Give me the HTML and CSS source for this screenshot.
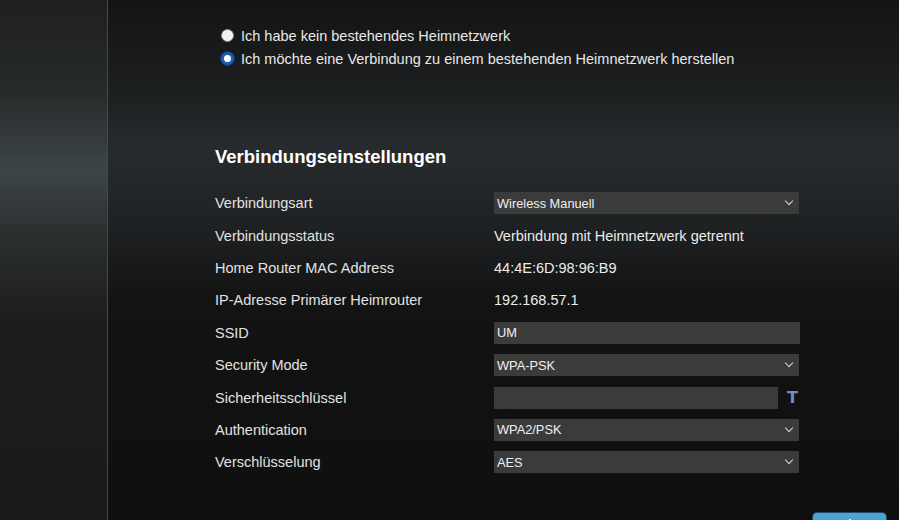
FILE: index.html
```html
<!DOCTYPE html>
<html lang="de">

<head>
    <meta charset="UTF-8">
    <meta name="viewport" content="width=device-width, initial-scale=1.0">
    <title>Heimnetzwerk</title>
    <link rel="stylesheet" href="styles.css">
</head>

<body>
    <div class="sidebar"></div>

    <div class="main">
        <div class="radio-group">
            <label class="radio-row">
                <input type="radio" name="mode" value="none">
                <span>Ich habe kein bestehendes Heimnetzwerk</span>
            </label>
            <label class="radio-row">
                <input type="radio" name="mode" value="existing" checked>
                <span>Ich möchte eine Verbindung zu einem bestehenden Heimnetzwerk herstellen</span>
            </label>
        </div>

        <h2 class="section-title">Verbindungseinstellungen</h2>

        <div class="settings">
            <div class="label">Verbindungsart</div>
            <div class="value">
                <div class="select-wrap">
                    <select>
                        <option>Wireless Manuell</option>
                    </select>
                </div>
            </div>

            <div class="label">Verbindungsstatus</div>
            <div class="value">Verbindung mit Heimnetzwerk getrennt</div>

            <div class="label">Home Router MAC Address</div>
            <div class="value">44:4E:6D:98:96:B9</div>

            <div class="label">IP-Adresse Primärer Heimrouter</div>
            <div class="value">192.168.57.1</div>

            <div class="label">SSID</div>
            <div class="value">
                <input class="text-input" type="text" value="UM">
            </div>

            <div class="label">Security Mode</div>
            <div class="value">
                <div class="select-wrap">
                    <select>
                        <option>WPA-PSK</option>
                    </select>
                </div>
            </div>

            <div class="label">Sicherheitsschlüssel</div>
            <div class="value key-row">
                <input class="text-input" type="password" value="">
                <span class="show-key">T</span>
            </div>

            <div class="label">Authentication</div>
            <div class="value">
                <div class="select-wrap">
                    <select>
                        <option>WPA2/PSK</option>
                    </select>
                </div>
            </div>

            <div class="label">Verschlüsselung</div>
            <div class="value">
                <div class="select-wrap">
                    <select>
                        <option>AES</option>
                    </select>
                </div>
            </div>
        </div>

        <div class="actions">
            <button class="btn-primary" aria-label="Weiter"><span class="btn-mark"></span></button>
        </div>
    </div>
</body>

</html>
```

FILE: styles.css
```css
html,
body {
    height: 100%;
}

body {
    margin: 0;
    display: flex;
    font-family: "Liberation Sans", Arial, sans-serif;
    color: #e6e6e6;
    background: #0f0f0f;
    overflow: hidden;
}

.sidebar {
    width: 107px;
    flex-shrink: 0;
    border-right: 1px solid #3a4c57;
    background: linear-gradient(#1f1f1f 0, #262a2b 90px, #3d4546 170px, #2b2f30 235px, #1d1d1d 320px, #1a1a1a 100%);
}

.main {
    flex: 1;
    padding: 24px 0 0 107px;
    background: linear-gradient(#141414 0, #1b1d1e 80px, #272b2d 150px, #202325 215px, #131313 300px, #0f0f0f 100%);
}

/* radio choice */
.radio-group {
    width: 585px;
}

.radio-row {
    display: flex;
    align-items: center;
    height: 23px;
    font-size: 14.5px;
    color: #e8e8e8;
    cursor: pointer;
}

.radio-row input {
    appearance: none;
    -webkit-appearance: none;
    width: 13px;
    height: 13px;
    margin: 0 7px 0 6px;
    border-radius: 50%;
    border: 1px solid #8a8a8a;
    background: #f2f2f2;
    box-sizing: border-box;
}

.radio-row input:checked {
    border: 3px solid #1a5fb4;
    background: #fff;
    box-shadow: 0 0 0 1px #0d3a70;
}

.section-title {
    margin: 76px 0 0;
    font-size: 18.5px;
    font-weight: bold;
    color: #fff;
    line-height: 21px;
}

/* settings table */
.settings {
    display: grid;
    grid-template-columns: 279px 306px;
    grid-auto-rows: 32.4px;
    margin-top: 20px;
    font-size: 14.5px;
}

.label,
.value {
    display: flex;
    align-items: center;
}

.label {
    color: #e2e2e2;
}

.value {
    color: #ececec;
}

.select-wrap {
    position: relative;
    width: 305px;
}

.select-wrap select {
    appearance: none;
    -webkit-appearance: none;
    width: 100%;
    height: 22px;
    padding: 0 0 0 3px;
    border: none;
    background: #3b3b3b;
    color: #f0f0f0;
    font-family: "Liberation Sans", Arial, sans-serif;
    font-size: 12.8px;
    outline: none;
}

.select-wrap::after {
    content: "";
    position: absolute;
    right: 7px;
    top: 6px;
    width: 5px;
    height: 5px;
    border-right: 1.5px solid #d8d8d8;
    border-bottom: 1.5px solid #d8d8d8;
    transform: rotate(45deg);
    pointer-events: none;
}

.text-input {
    width: 306px;
    height: 22px;
    box-sizing: border-box;
    padding: 0 3px;
    border: none;
    background: #3b3b3b;
    color: #f0f0f0;
    font-family: "Liberation Sans", Arial, sans-serif;
    font-size: 12.8px;
    outline: none;
}

.key-row .text-input {
    width: 284px;
}

.show-key {
    margin-left: 9px;
    font-family: "DejaVu Sans", sans-serif;
    font-weight: bold;
    font-size: 16px;
    color: #6f8fc4;
    line-height: 1;
}

.actions {
    display: flex;
    justify-content: flex-end;
    width: 671px;
    margin-top: 34px;
}

.btn-primary {
    display: flex;
    justify-content: center;
    width: 73px;
    height: 30px;
    padding: 6px 0 0;
    border: none;
    border-radius: 4px;
    background: linear-gradient(#4fa6d3, #3b8fc0);
    box-shadow: 0 0 0 1px #1d4a66;
}

.btn-mark {
    width: 2px;
    height: 6px;
    background: #e8f4fb;
}
```
